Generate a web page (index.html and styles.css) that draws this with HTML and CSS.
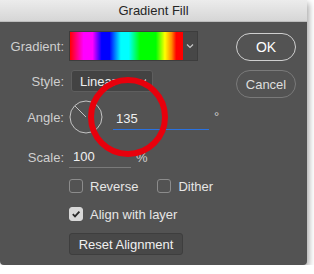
FILE: index.html
```html
<!DOCTYPE html>
<html lang="en">
<head>
    <meta charset="UTF-8">
    <title>Gradient Fill</title>
    <link rel="stylesheet" href="styles.css">
</head>
<body>
    <div class="window">
        <div class="titlebar">Gradient Fill</div>
        <div class="content">
            <div class="form">
                <div class="row row-gradient">
                    <span class="label">Gradient:</span>
                    <div class="gradient-picker">
                        <div class="swatch"></div>
                        <div class="drop">
                            <svg width="8" height="6" viewBox="0 0 8 6"><path d="M1 1.5 L4 4.5 L7 1.5" fill="none" stroke="#c8c8c8" stroke-width="1.2"/></svg>
                        </div>
                    </div>
                </div>
                <div class="row row-style">
                    <span class="label">Style:</span>
                    <div class="select">
                        <span>Linear</span>
                        <svg width="8" height="6" viewBox="0 0 8 6"><path d="M1 1.5 L4 4.5 L7 1.5" fill="none" stroke="#c8c8c8" stroke-width="1.2"/></svg>
                    </div>
                </div>
                <div class="row row-angle">
                    <span class="label">Angle:</span>
                    <svg class="dial" width="34" height="34" viewBox="0 0 34 34">
                        <circle cx="17" cy="17" r="16" fill="none" stroke="#c4c4c4" stroke-width="1"/>
                        <line x1="17" y1="17" x2="6" y2="6" stroke="#c4c4c4" stroke-width="1"/>
                    </svg>
                    <div class="field field-angle">135</div>
                    <span class="unit deg">°</span>
                </div>
                <div class="row row-scale">
                    <span class="label">Scale:</span>
                    <div class="field field-scale">100</div>
                    <span class="unit">%</span>
                </div>
                <div class="row row-check">
                    <span class="label"></span>
                    <label class="check"><span class="box"></span>Reverse</label>
                    <label class="check"><span class="box"></span>Dither</label>
                </div>
                <div class="row row-align">
                    <span class="label"></span>
                    <label class="check"><span class="box checked">
                        <svg width="10" height="10" viewBox="0 0 10 10"><path d="M1.8 5.2 L4 7.4 L8.4 2.6" fill="none" stroke="#2a2a2a" stroke-width="1.8"/></svg>
                    </span>Align with layer</label>
                </div>
                <div class="row row-reset">
                    <span class="label"></span>
                    <button class="reset">Reset Alignment</button>
                </div>
            </div>
            <div class="actions">
                <button class="pill ok">OK</button>
                <button class="pill cancel">Cancel</button>
            </div>
        </div>
        <div class="highlight"></div>
    </div>
</body>
</html>
```

FILE: styles.css
```css
body {
    margin: 0;
    background: #ffffff;
    font-family: "Liberation Sans", Arial, sans-serif;
}
.window {
    position: relative;
    width: 307px;
    height: 265px;
    background: #535353;
    box-shadow: 2px 3px 6px rgba(0, 0, 0, 0.35);
    border-radius: 0 0 4px 4px;
}
.titlebar {
    height: 22px;
    line-height: 22px;
    text-align: center;
    font-size: 13px;
    color: #262626;
    background: linear-gradient(#ececec, #d6d6d6);
    border-bottom: 1px solid #bdbdbd;
    box-sizing: border-box;
}
.content {
    display: flex;
    padding-top: 10px;
}
.form {
    flex: 1;
}
.row {
    display: flex;
    align-items: center;
    gap: 5px;
}
.label {
    width: 64px;
    text-align: right;
    font-size: 13px;
    color: #cfcfcf;
    flex-shrink: 0;
}
.row-gradient {
    height: 28px;
}
.gradient-picker {
    display: flex;
    height: 28px;
    border: 1px solid #3d3d3d;
}
.swatch {
    width: 113px;
    background: linear-gradient(to right, #ff0000 0%, #ff00ff 12%, #ff00ff 20%, #0000ff 28%, #0000ff 35%, #00ffff 45%, #00ffff 52%, #00ff00 62%, #00ff00 76%, #ffff00 84%, #ff8800 90%, #ff0000 94%, #ff0000 100%);
}
.drop {
    width: 14px;
    background: #474747;
    display: flex;
    align-items: center;
    justify-content: center;
}
.row-style {
    margin-top: 10px;
    height: 22px;
}
.select {
    margin-left: 2px;
    width: 82px;
    height: 22px;
    box-sizing: border-box;
    background: #434343;
    border: 1px solid #5e5e5e;
    border-radius: 3px;
    display: flex;
    align-items: center;
    justify-content: space-between;
    padding: 0 5px 0 8px;
    font-size: 13px;
    color: #efefef;
}
.row-angle {
    margin-top: 8px;
    height: 34px;
}
.dial {
    flex-shrink: 0;
}
.field {
    font-size: 13px;
    color: #f0f0f0;
    box-sizing: border-box;
    height: 22px;
    line-height: 22px;
}
.field-angle {
    margin-left: 5px;
    width: 96px;
    padding-left: 3px;
    border-bottom: 1px solid #2a72e0;
    margin-top: 3px;
}
.deg {
    align-self: flex-start;
    margin-top: 9px;
}
.unit {
    font-size: 13px;
    color: #cfcfcf;
}
.row-scale {
    margin-top: 12px;
    height: 22px;
}
.field-scale {
    width: 62px;
    padding-left: 4px;
    border-bottom: 1px solid #7a7a7a;
}
.row-check {
    margin-top: 10px;
    height: 16px;
}
.row-align {
    margin-top: 12px;
    height: 16px;
}
.check {
    display: flex;
    align-items: center;
    gap: 7px;
    font-size: 13px;
    color: #e6e6e6;
    margin-right: 14px;
}
.box {
    width: 14px;
    height: 14px;
    box-sizing: border-box;
    border: 1px solid #8c8c8c;
    border-radius: 3px;
    display: flex;
    align-items: center;
    justify-content: center;
}
.box.checked {
    background: #d8d8d8;
    border-color: #d8d8d8;
}
.row-reset {
    margin-top: 11px;
}
.reset {
    width: 114px;
    height: 22px;
    background: #484848;
    border: 1px solid #3e3e3e;
    border-radius: 3px;
    color: #f0f0f0;
    font-family: "Liberation Sans", Arial, sans-serif;
    font-size: 13px;
    padding: 0;
}
.actions {
    width: 60px;
    padding: 1px 11px 0 0;
    display: flex;
    flex-direction: column;
    gap: 9px;
}
.pill {
    height: 28px;
    border-radius: 14px;
    background: transparent;
    font-family: "Liberation Sans", Arial, sans-serif;
    padding: 0;
}
.ok {
    border: 1.5px solid #cfcfcf;
    color: #ffffff;
    font-size: 14px;
}
.cancel {
    border: 1px solid #7a7a7a;
    color: #dedede;
    font-size: 13px;
}
.highlight {
    position: absolute;
    left: 88px;
    top: 77px;
    width: 80px;
    height: 80px;
    box-sizing: border-box;
    border: 6px solid #e8000c;
    border-radius: 50%;
}
```
